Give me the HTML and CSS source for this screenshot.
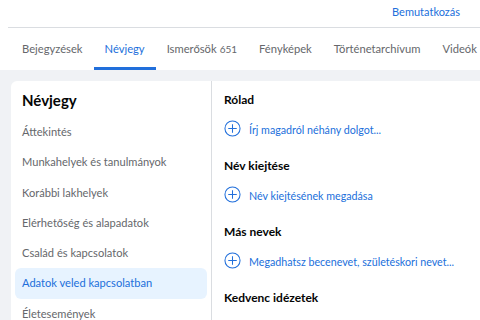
FILE: index.html
```html
<!DOCTYPE html>
<html lang="hu">
<head>
    <meta charset="UTF-8">
    <meta name="viewport" content="width=device-width, initial-scale=1.0">
    <title>Névjegy</title>
    <link rel="stylesheet" href="styles.css">
</head>
<body>

    <div class="top">
        <div class="top-bar">
            <a class="intro-link" href="#">Bemutatkozás</a>
        </div>
        <nav class="tabs">
            <a class="tab" href="#">Bejegyzések</a>
            <a class="tab active" href="#">Névjegy</a>
            <a class="tab" href="#">Ismerősök <span class="count">651</span></a>
            <a class="tab" href="#">Fényképek</a>
            <a class="tab" href="#">Történetarchívum</a>
            <a class="tab" href="#">Videók</a>
        </nav>
    </div>

    <div class="page">
        <div class="panel">
            <aside class="side">
                <h2>Névjegy</h2>
                <a class="side-item" href="#">Áttekintés</a>
                <a class="side-item" href="#">Munkahelyek és tanulmányok</a>
                <a class="side-item" href="#">Korábbi lakhelyek</a>
                <a class="side-item" href="#">Elérhetőség és alapadatok</a>
                <a class="side-item" href="#">Család és kapcsolatok</a>
                <a class="side-item selected" href="#">Adatok veled kapcsolatban</a>
                <a class="side-item" href="#">Életesemények</a>
            </aside>

            <section class="details">
                <h3>Rólad</h3>
                <a class="add" href="#">
                    <svg class="plus" viewBox="0 0 18 18"><circle cx="9" cy="9" r="8"/><path d="M9 4.5v9M4.5 9h9"/></svg>
                    Írj magadról néhány dolgot...
                </a>

                <h3>Név kiejtése</h3>
                <a class="add" href="#">
                    <svg class="plus" viewBox="0 0 18 18"><circle cx="9" cy="9" r="8"/><path d="M9 4.5v9M4.5 9h9"/></svg>
                    Név kiejtésének megadása
                </a>

                <h3>Más nevek</h3>
                <a class="add" href="#">
                    <svg class="plus" viewBox="0 0 18 18"><circle cx="9" cy="9" r="8"/><path d="M9 4.5v9M4.5 9h9"/></svg>
                    Megadhatsz becenevet, születéskori nevet...
                </a>

                <h3>Kedvenc idézetek</h3>
            </section>
        </div>
    </div>

</body>
</html>
```

FILE: styles.css
```css
* {
    box-sizing: border-box;
}

body {
    margin: 0;
    height: 320px;
    overflow: hidden;
    background-color: #f0f2f5;
    font-family: Lato, "Noto Sans", sans-serif;
    font-size: 11px;
    color: #050505;
}

a {
    text-decoration: none;
}

.top {
    background-color: #ffffff;
}

.top-bar {
    display: flex;
    justify-content: flex-end;
    height: 28px;
    margin-left: 8px;
    padding-right: 20px;
    border-bottom: 1px solid #dadde1;
}

.intro-link {
    color: #216fdb;
    font-size: 11px;
    line-height: 24px;
}

.tabs {
    display: flex;
    padding-left: 11px;
    height: 42px;
    overflow: hidden;
}

.tab {
    display: flex;
    align-items: center;
    padding: 2px 11px 0;
    color: #65676b;
    font-size: 11.2px;
    border-bottom: 3px solid transparent;
    white-space: nowrap;
}

.tab .count {
    font-size: 10px;
    margin-left: 3px;
}

.tab.active {
    color: #216fdb;
    border-bottom-color: #216fdb;
}

.page {
    padding: 11px 0 0 11px;
}

.panel {
    display: flex;
    background-color: #ffffff;
    border-radius: 6px 0 0 0;
    height: 260px;
}

.side {
    width: 201px;
    padding: 6px 4px 0;
    border-right: 1px solid #dadde1;
    display: flex;
    flex-direction: column;
}

.side h2 {
    margin: 0 0 4px 7px;
    font-size: 15px;
    font-weight: 700;
    line-height: 26px;
}

.side-item {
    display: block;
    flex: none;
    padding: 0 7px;
    height: 30.3px;
    line-height: 30px;
    color: #65676b;
    font-size: 11.1px;
    border-radius: 6px;
    white-space: nowrap;
}

.side-item.selected {
    background-color: #e7f3ff;
    color: #216fdb;
}

.details {
    flex: 1;
    padding: 8px 12px 0;
    overflow: hidden;
}

.details h3 {
    margin: 0;
    font-size: 12px;
    font-weight: 700;
    line-height: 22px;
}

.add {
    display: flex;
    align-items: center;
    gap: 8px;
    margin: 9px 0 17px;
    color: #216fdb;
    font-size: 10.7px;
    white-space: nowrap;
}

.plus {
    flex: none;
    width: 17px;
    height: 17px;
    margin-bottom: 1px;
    fill: none;
    stroke: #216fdb;
    stroke-width: 1.1;
}
```
